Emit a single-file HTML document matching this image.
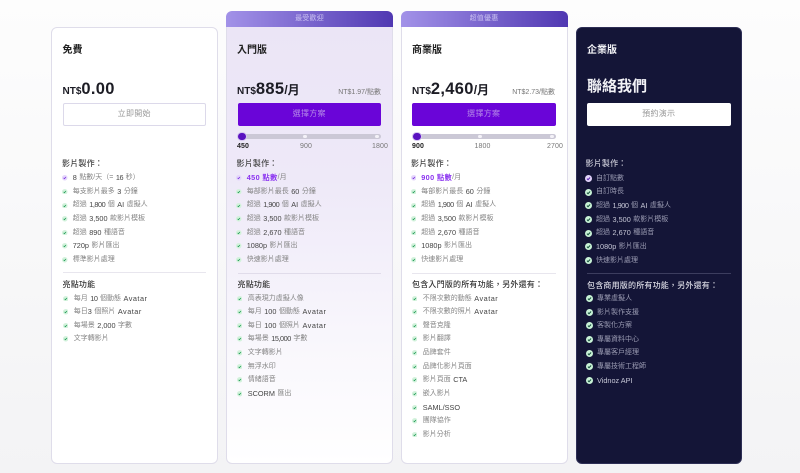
<!DOCTYPE html>
<html lang="zh-Hant"><head><meta charset="utf-8"><title>Pricing</title>
<style>
*{box-sizing:border-box;margin:0;padding:0}
html,body{width:800px;height:473px;overflow:hidden}
body{position:relative;background:linear-gradient(180deg,#fdfdfd 0%,#f3f3f5 100%);font-family:"Liberation Sans","Noto Sans CJK TC",sans-serif;color:#333}
#w{position:absolute;left:0;top:0;width:800px;height:473px;filter:blur(.35px)}
.a{position:absolute;white-space:nowrap}
.card{position:absolute;top:26.5px;height:437.5px;width:167px;background:#fff;border:1px solid #dfddea;border-radius:6px}
.c2{border-radius:0 0 6px 6px;border-top:0;background:linear-gradient(180deg,#ebe5f6 0%,#eee9f8 35%,#f8f6fc 70%,#fff 100%)}
.c3{border-radius:0 0 6px 6px;border-top:0}
.c4{background:#141537;border-color:#2d2e55}
.hd{position:absolute;top:10.5px;height:16px;width:167px;border-radius:6px 6px 0 0;background:linear-gradient(90deg,#a292e8,#5038b2);color:#c9c0f0;font-size:7px;line-height:16px;text-align:center;letter-spacing:.2px}
.t{font-size:10px;font-weight:700;line-height:14px;top:44px;color:#222}
.p{top:77px;font-weight:700;color:#1c1c24;line-height:24px;font-size:12px}
.p small{font-size:10px}
.p b{font-size:16.5px;letter-spacing:.3px}
.u{top:87px;font-size:7px;line-height:12px;color:#777}
.b{position:absolute;top:103px;height:22.5px;width:143.5px;border-radius:2px;font-size:8px;line-height:22px;text-align:center;letter-spacing:.3px}
.b1{background:#fff;border:1px solid #dcd9ea;color:#999;line-height:20.5px}
.b2{background:#6a05d8;color:#b58ae8}
.b4{background:#fff;color:#999}
.tr{position:absolute;top:133.5px;height:5.5px;width:143.5px;border-radius:3px;background:#cbc8d6}
.d{position:absolute;top:134.5px;width:3.6px;height:3.6px;border-radius:50%;background:#f4f2f8}
.k{position:absolute;top:131.5px;width:9.6px;height:9.6px;border-radius:50%;background:#5a12c0;border:1.5px solid #d6c7f0}
.l{top:141.8px;font-size:7px;line-height:10px;color:#777;letter-spacing:.1px}
.l.s{color:#222;font-weight:700}
.h{font-size:8px;line-height:12px;color:#444;font-weight:500;letter-spacing:.2px}
.h2{font-size:8px;line-height:12px;color:#333;font-weight:500;letter-spacing:.2px;top:279px}
.hr{position:absolute;height:1px;width:143.5px;background:#e8e6ee}
ul{position:absolute;list-style:none}
li{height:13.65px;line-height:13.65px;font-size:7px;color:#858585;white-space:nowrap;display:flex;align-items:center}
li i{font-style:normal;font-size:7.3px;color:#444;margin:0 2.5px}
li i.f{margin-left:0}
li i.o{letter-spacing:-.45px}
li i.v{letter-spacing:.5px}
li svg{flex:none;width:5.5px;height:5.5px;margin:0 5px 0 .25px}
li em{font-style:normal;font-weight:700;font-size:7.3px;color:#8a32f0;letter-spacing:.35px}
.n li svg{margin-right:5.5px}
.dk li{color:#9a9bb2}
.dk li i{color:#c6c7d6}
.dk li svg{width:7px;height:7px;margin:0 4.5px 0 0}
</style></head><body>
<svg width="0" height="0" style="position:absolute"><defs>
<symbol id="g" viewBox="0 0 12 12"><circle cx="6" cy="6" r="6" fill="#d3f2dc"/><path d="M3.5 6.2l1.8 1.8 3.3-3.6" fill="none" stroke="#1f9a55" stroke-width="1.6"/></symbol>
<symbol id="v" viewBox="0 0 12 12"><circle cx="6" cy="6" r="6" fill="#e4d6fb"/><path d="M3.5 6.2l1.8 1.8 3.3-3.6" fill="none" stroke="#7a2fe0" stroke-width="1.6"/></symbol>
<symbol id="G" viewBox="0 0 12 12"><circle cx="6" cy="6" r="6" fill="#c8f2d6"/><path d="M3.3 6.2l1.9 1.9 3.5-3.8" fill="none" stroke="#14503a" stroke-width="1.7"/></symbol>
<symbol id="V" viewBox="0 0 12 12"><circle cx="6" cy="6" r="6" fill="#e2d4fa"/><path d="M3.3 6.2l1.9 1.9 3.5-3.8" fill="none" stroke="#5a22b0" stroke-width="1.7"/></symbol>
</defs></svg>
<div id="w">
<!-- Card 1 -->
<div class="card" style="left:51px"></div>
<div class="a t" style="left:62.5px">免費</div>
<div class="a p" style="left:62.5px"><small>NT$</small><b>0.00</b></div>
<div class="b b1" style="left:62.5px">立即開始</div>
<div class="a h" style="left:62px;top:157.5px">影片製作：</div>
<ul style="left:62px;top:171.2px">
<li><svg><use href="#v"/></svg><i class="f">8</i>點數/天（= <i class="o">16</i>秒）</li>
<li><svg><use href="#g"/></svg>每支影片最多<i>3</i>分鐘</li>
<li><svg><use href="#g"/></svg>超過<i class="o">1,800</i>個<i>AI</i>虛擬人</li>
<li><svg><use href="#g"/></svg>超過<i>3,500</i>款影片模板</li>
<li><svg><use href="#g"/></svg>超過<i>890</i>種語音</li>
<li><svg><use href="#g"/></svg><i class="f">720p</i>影片匯出</li>
<li><svg><use href="#g"/></svg>標準影片處理</li>
</ul>
<div class="hr" style="left:62.5px;top:271.5px"></div>
<div class="a h2" style="left:62.5px">亮點功能</div>
<ul class="n" style="left:62.5px;top:291.5px">
<li><svg><use href="#g"/></svg>每月<i class="o">10</i>個動態<i class="v">Avatar</i></li>
<li><svg><use href="#g"/></svg>每日<i style="margin-left:0">3</i>個照片<i class="v">Avatar</i></li>
<li><svg><use href="#g"/></svg>每場景<i>2,000</i>字數</li>
<li><svg><use href="#g"/></svg>文字轉影片</li>
</ul>

<!-- Card 2 -->
<div class="hd" style="left:226px">最受歡迎</div>
<div class="card c2" style="left:226px"></div>
<div class="a t" style="left:237px">入門版</div>
<div class="a p" style="left:237px"><small>NT$</small><b>885</b>/月</div>
<div class="a u" style="right:419px">NT$1.97/點數</div>
<div class="b b2" style="left:237.5px">選擇方案</div>
<div class="tr" style="left:237.5px"></div>
<div class="d" style="left:303.2px"></div>
<div class="d" style="left:375.2px"></div>
<div class="k" style="left:237.2px"></div>
<div class="a l s" style="left:237px">450</div>
<div class="a l" style="left:300px">900</div>
<div class="a l" style="left:372px">1800</div>
<div class="a h" style="left:236.5px;top:157.5px">影片製作：</div>
<ul style="left:236px;top:171.2px">
<li><svg><use href="#v"/></svg><em>450 點數</em>/月</li>
<li><svg><use href="#g"/></svg>每部影片最長<i>60</i>分鐘</li>
<li><svg><use href="#g"/></svg>超過<i class="o">1,900</i>個<i>AI</i>虛擬人</li>
<li><svg><use href="#g"/></svg>超過<i>3,500</i>款影片模板</li>
<li><svg><use href="#g"/></svg>超過<i>2,670</i>種語音</li>
<li><svg><use href="#g"/></svg><i class="f">1080p</i>影片匯出</li>
<li><svg><use href="#g"/></svg>快速影片處理</li>
</ul>
<div class="hr" style="left:237.5px;top:272.5px;background:#e0dcea"></div>
<div class="a h2" style="left:237.5px">亮點功能</div>
<ul class="n" style="left:236.5px;top:291.5px">
<li><svg><use href="#g"/></svg>高表現力虛擬人像</li>
<li><svg><use href="#g"/></svg>每月<i>100</i>個動態<i class="v">Avatar</i></li>
<li><svg><use href="#g"/></svg>每日<i>100</i>個照片<i class="v">Avatar</i></li>
<li><svg><use href="#g"/></svg>每場景<i class="o">15,000</i>字數</li>
<li><svg><use href="#g"/></svg>文字轉影片</li>
<li><svg><use href="#g"/></svg>無浮水印</li>
<li><svg><use href="#g"/></svg>情緒語音</li>
<li><svg><use href="#g"/></svg><i class="f">SCORM</i>匯出</li>
</ul>

<!-- Card 3 -->
<div class="hd" style="left:400.5px">超值優惠</div>
<div class="card c3" style="left:400.5px"></div>
<div class="a t" style="left:412px">商業版</div>
<div class="a p" style="left:412px"><small>NT$</small><b>2,460</b>/月</div>
<div class="a u" style="right:245px">NT$2.73/點數</div>
<div class="b b2" style="left:412px">選擇方案</div>
<div class="tr" style="left:412px"></div>
<div class="d" style="left:478.2px"></div>
<div class="d" style="left:550.2px"></div>
<div class="k" style="left:412px"></div>
<div class="a l s" style="left:412px">900</div>
<div class="a l" style="left:474.5px">1800</div>
<div class="a l" style="left:547px">2700</div>
<div class="a h" style="left:411px;top:157.5px">影片製作：</div>
<ul style="left:410.5px;top:171.2px">
<li><svg><use href="#v"/></svg><em>900 點數</em>/月</li>
<li><svg><use href="#g"/></svg>每部影片最長<i>60</i>分鐘</li>
<li><svg><use href="#g"/></svg>超過<i class="o">1,900</i>個<i>AI</i>虛擬人</li>
<li><svg><use href="#g"/></svg>超過<i>3,500</i>款影片模板</li>
<li><svg><use href="#g"/></svg>超過<i>2,670</i>種語音</li>
<li><svg><use href="#g"/></svg><i class="f">1080p</i>影片匯出</li>
<li><svg><use href="#g"/></svg>快速影片處理</li>
</ul>
<div class="hr" style="left:412px;top:272.5px"></div>
<div class="a h2" style="left:412px">包含入門版的所有功能，另外還有：</div>
<ul class="n" style="left:411.5px;top:291.5px">
<li><svg><use href="#g"/></svg>不限次數的動態<i class="v">Avatar</i></li>
<li><svg><use href="#g"/></svg>不限次數的照片<i class="v">Avatar</i></li>
<li><svg><use href="#g"/></svg>聲音克隆</li>
<li><svg><use href="#g"/></svg>影片翻譯</li>
<li><svg><use href="#g"/></svg>品牌套件</li>
<li><svg><use href="#g"/></svg>品牌化影片頁面</li>
<li><svg><use href="#g"/></svg>影片頁面<i>CTA</i></li>
<li><svg><use href="#g"/></svg>嵌入影片</li>
<li><svg><use href="#g"/></svg><i class="f">SAML/SSO</i></li>
<li><svg><use href="#g"/></svg>團隊協作</li>
<li><svg><use href="#g"/></svg>影片分析</li>
</ul>

<!-- Card 4 -->
<div class="card c4" style="left:575.5px;width:166px"></div>
<div class="a t" style="left:587px;color:#f2f2f6">企業版</div>
<div class="a" style="left:587px;top:76px;font-size:15px;line-height:22px;font-weight:700;color:#f2f2f6">聯絡我們</div>
<div class="b b4" style="left:587px">預約演示</div>
<div class="a h" style="left:585.5px;top:158px;color:#c8c8d4">影片製作：</div>
<ul class="dk" style="left:584.5px;top:171.7px">
<li><svg><use href="#V"/></svg>自訂點數</li>
<li><svg><use href="#G"/></svg>自訂時長</li>
<li><svg><use href="#G"/></svg>超過<i class="o">1,900</i>個<i>AI</i>虛擬人</li>
<li><svg><use href="#G"/></svg>超過<i>3,500</i>款影片模板</li>
<li><svg><use href="#G"/></svg>超過<i>2,670</i>種語音</li>
<li><svg><use href="#G"/></svg><i class="f">1080p</i>影片匯出</li>
<li><svg><use href="#G"/></svg>快速影片處理</li>
</ul>
<div class="hr" style="left:587px;top:272.5px;background:#3c3d5e"></div>
<div class="a h2" style="left:587px;top:279.5px;color:#d8d8e2">包含商用版的所有功能，另外還有：</div>
<ul class="dk" style="left:585.5px;top:291.9px">
<li><svg><use href="#G"/></svg>專業虛擬人</li>
<li><svg><use href="#G"/></svg>影片製作支援</li>
<li><svg><use href="#G"/></svg>客製化方案</li>
<li><svg><use href="#G"/></svg>專屬資料中心</li>
<li><svg><use href="#G"/></svg>專屬客戶經理</li>
<li><svg><use href="#G"/></svg>專屬技術工程師</li>
<li><svg><use href="#G"/></svg><i class="f">Vidnoz API</i></li>
</ul>
</div>
</body></html>
